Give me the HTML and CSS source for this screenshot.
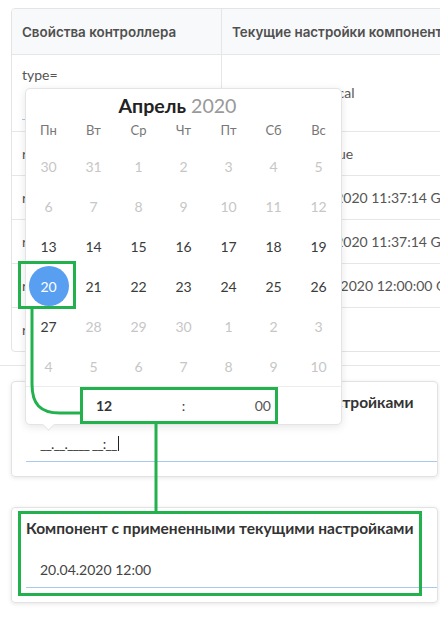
FILE: index.html
```html
<!DOCTYPE html>
<html lang="ru">
<head>
<meta charset="utf-8">
<title>Datepicker</title>
<link rel="stylesheet" href="styles.css">
</head>
<body>
<div class="section">
  <div class="table-card">
    <div class="row head">
      <div class="cell c1">Свойства контроллера</div>
      <div class="cell c2">Текущие настройки компонента</div>
    </div>
    <div class="row first">
      <div class="cell c1">
        <div class="lbl">type=</div>
        <div class="mini-field"></div>
      </div>
      <div class="cell c2">type: datetime-local</div>
    </div>
    <div class="row">
      <div class="cell c1">readonly=</div>
      <div class="cell c2">readonly value: true</div>
    </div>
    <div class="row">
      <div class="cell c1">rangeMin=</div>
      <div class="cell c2">Sunday, April 19 2020 11:37:14 GMT+0300 (Москва)</div>
    </div>
    <div class="row">
      <div class="cell c1">rangeMax=</div>
      <div class="cell c2">Sunday, April 19 2020 11:37:14 GMT+0300 (Москва)</div>
    </div>
    <div class="row">
      <div class="cell c1">rawValue=</div>
      <div class="cell c2">Monday, April 20 2020 12:00:00 GMT+0300 (Москва)</div>
    </div>
    <div class="row last">
      <div class="cell c1">required=</div>
      <div class="cell c2"></div>
    </div>
  </div>
</div>

<div class="divider"></div>

<div class="section cards">
  <div class="card">
    <div class="card-title">Компонент с примененными текущими настройками</div>
    <div class="field"><span class="mask">__.__.____ __:__</span><span class="caret"></span></div>
  </div>
  <div class="card second">
    <div class="card-title">Компонент с примененными текущими настройками</div>
    <div class="field"><span class="value">20.04.2020 12:00</span></div>
  </div>
</div>

<div class="picker">
  <div class="picker-head"><b>Апрель</b> <span class="year">2020</span></div>
  <div class="weekdays">
    <span>Пн</span><span>Вт</span><span>Ср</span><span>Чт</span><span>Пт</span><span>Сб</span><span>Вс</span>
  </div>
  <div class="days">
    <span class="out">30</span><span class="out">31</span><span class="out">1</span><span class="out">2</span><span class="out">3</span><span class="out">4</span><span class="out">5</span>
    <span class="out">6</span><span class="out">7</span><span class="out">8</span><span class="out">9</span><span class="out">10</span><span class="out">11</span><span class="out">12</span>
    <span>13</span><span>14</span><span>15</span><span>16</span><span>17</span><span>18</span><span>19</span>
    <span class="sel"><i>20</i></span><span>21</span><span>22</span><span>23</span><span>24</span><span>25</span><span>26</span>
    <span>27</span><span class="out">28</span><span class="out">29</span><span class="out">30</span><span class="out">1</span><span class="out">2</span><span class="out">3</span>
    <span class="out">4</span><span class="out">5</span><span class="out">6</span><span class="out">7</span><span class="out">8</span><span class="out">9</span><span class="out">10</span>
  </div>
  <div class="time">
    <span class="hh">12</span><span class="colon">:</span><span class="mm">00</span>
  </div>
</div>

<svg class="marks" width="440" height="620" viewBox="0 0 440 620" aria-hidden="true">
  <rect x="19.5" y="262.5" width="55" height="45" />
  <path d="M32 309 L32 384 C32 404 40 413 60 413 L81 413" />
  <rect x="81.5" y="388.5" width="195" height="34" />
  <path d="M156 424 L156 511" />
  <rect x="19.5" y="512.5" width="401" height="82" />
</svg>
</body>
</html>
```

FILE: styles.css
```css
html, body {
  margin: 0;
  padding: 0;
  background: #fff;
  overflow: hidden;
}
body {
  position: relative;
  width: 440px;
  height: 620px;
  font-family: Lato, "Noto Sans", sans-serif;
  font-size: 14px;
  color: #555;
}

.section {
  padding: 8px 0 0 11px;
}

/* table card */
.table-card {
  width: 640px;
  border: 1px solid #e4e4e4;
  border-radius: 4px;
  overflow: hidden;
}
.row {
  display: grid;
  grid-template-columns: 210px 1fr;
  border-bottom: 1px solid #e6e6e6;
}
.row.last {
  border-bottom: 0;
}
.cell {
  padding: 0 10px;
  display: flex;
  flex-direction: column;
  justify-content: center;
  white-space: nowrap;
  height: 43px;
  line-height: 20px;
}
.cell.c1 {
  border-right: 1px solid #e6e6e6;
}
.row.head {
  background: #f8f9fa;
}
.row.head .cell {
  height: 45px;
  font-family: Inter, "Noto Sans", sans-serif;
  font-weight: 600;
  font-size: 13.4px;
  color: #505050;
}
.row.first .cell {
  height: 76px;
}
.row.first .c1 {
  justify-content: flex-start;
  padding-top: 10px;
  height: 66px;
}
.mini-field {
  height: 34px;
  border-bottom: 1px solid #aac8ee;
}

.divider {
  height: 1px;
  background: #e6e6e6;
  margin-top: 13px;
}

/* cards */
.cards {
  padding: 15px 2px 0 11px;
}
.card {
  border: 1px solid #e2e2e2;
  border-radius: 4px;
  box-shadow: 0 1px 4px rgba(0, 0, 0, 0.1);
  padding: 10px 0 14px 14px;
}
.card.second {
  margin-top: 30px;
}
.card-title {
  font-weight: 700;
  font-size: 15.5px;
  line-height: 20px;
  color: #333;
  white-space: nowrap;
}
.field {
  margin-top: 13px;
  height: 36px;
  border-bottom: 1px solid #aac8ee;
  display: flex;
  align-items: center;
  padding-left: 14px;
  color: #444;
  font-size: 14px;
}
.mask {
  letter-spacing: -0.9px;
  color: #333;
}
.caret {
  display: inline-block;
  width: 1px;
  height: 15px;
  background: #222;
  margin-left: 2px;
}

/* datepicker popup */
.picker {
  position: absolute;
  left: 25px;
  top: 88px;
  width: 315px;
  border: 1px solid #e4e4e4;
  border-radius: 5px;
  background: #fff;
  box-shadow: 0 2px 8px rgba(0, 0, 0, 0.1);
}
.picker::after {
  content: "";
  position: absolute;
  left: 18px;
  bottom: -5px;
  width: 8px;
  height: 8px;
  background: #fff;
  border-right: 1px solid #e4e4e4;
  border-bottom: 1px solid #e4e4e4;
  transform: rotate(45deg);
}
.picker-head {
  padding: 7px 12px 0 0;
  text-align: center;
  font-size: 19.6px;
  line-height: 20px;
  color: #222;
}
.picker-head .year {
  color: #999;
}
.weekdays,
.days {
  display: grid;
  grid-template-columns: repeat(7, 45px);
}
.weekdays {
  margin-top: 4px;
  font-size: 13px;
  line-height: 20px;
  color: #777;
  text-align: center;
}
.days {
  margin-top: 6px;
  grid-auto-rows: 40px;
  font-size: 14px;
  color: #3a3a3a;
}
.days span {
  display: flex;
  align-items: center;
  justify-content: center;
}
.days .out {
  color: #c6c6c6;
}
.days .sel i {
  font-style: normal;
  width: 40px;
  height: 40px;
  border-radius: 50%;
  background: #589ff2;
  color: #fff;
  display: flex;
  align-items: center;
  justify-content: center;
}
.time {
  border-top: 1px solid #ececec;
  height: 37px;
  display: flex;
  justify-content: center;
  align-items: center;
  font-size: 14px;
}
.time .hh {
  width: 80px;
  font-weight: 700;
  color: #333;
}
.time .colon {
  width: 15px;
  text-align: center;
  color: #444;
}
.time .mm {
  width: 80px;
  text-align: right;
  color: #555;
}

/* annotation overlay */
.marks {
  position: absolute;
  left: 0;
  top: 0;
  pointer-events: none;
}
.marks rect,
.marks path {
  fill: none;
  stroke: #22b14c;
  stroke-width: 3;
}
```
